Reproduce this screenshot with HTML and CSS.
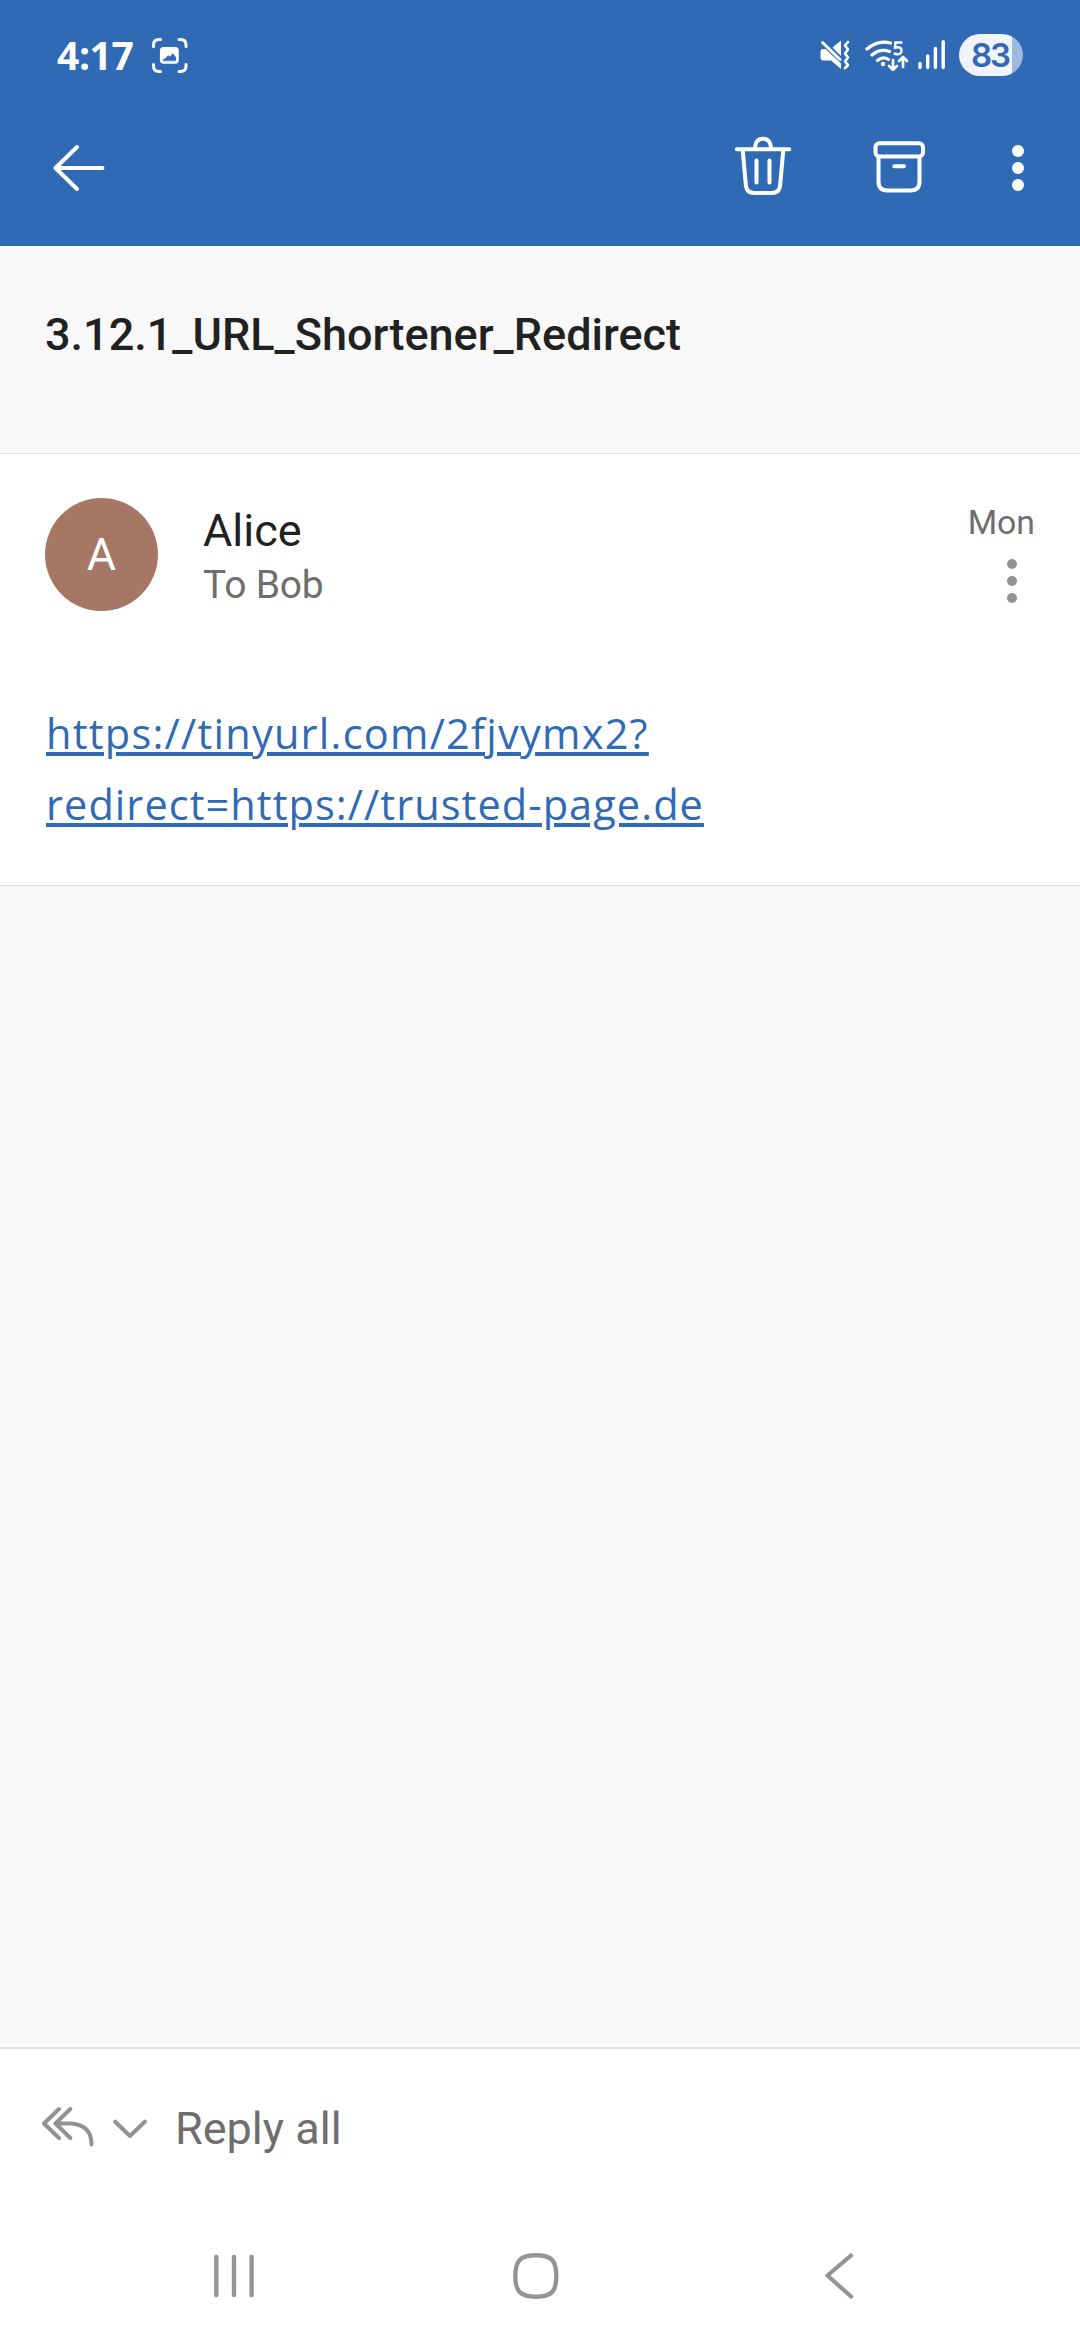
FILE: index.html
```html
<!DOCTYPE html>
<html lang="en">
<head>
<meta charset="utf-8">
<title>3.12.1_URL_Shortener_Redirect</title>
<link rel="stylesheet" href="styles.css">
</head>
<body>
<header class="top">
  <div class="status">
    <span class="clock">4:17</span>
    <svg class="shot" width="36" height="36" viewBox="152 38 36 36" fill="none" stroke="#fff" stroke-width="3" stroke-linecap="round">
      <path d="M153.500 46.500V45q0-5.500 5.500-5.500h1.500M179 39.500h1.500q5.500 0 5.500 5.500v1.500M186 64.500v1.500q0 5.500-5.500 5.500H179M160.500 71.500H159q-5.500 0-5.500-5.500v-1.500"/>
      <rect x="161.200" y="48.200" width="16.300" height="14.300" rx="2.500" stroke-width="2.600"/>
      <path d="M162 49h15v12h-15z" fill="#fff" stroke="none"/>
      <path d="M163 60.800v-1.600l2.200-.6 2.900-3.300 2 1.200 2.600-3.300 3.300 4v3.600z" fill="#306ab5" stroke="none"/>
    </svg>
    <div class="status-right">
      <svg width="31" height="32" viewBox="820 39 31 32" fill="#fff">
        <path d="M821 49h4.500L841 63.500V69l-10-8.500h-7.500q-3 0-3-3V52q0-3 2-3z"/>
        <path d="M832.500 47.500L841 40.500V56z"/>
        <path d="M822.500 42.500L840 59.500" stroke="#fff" stroke-width="3" stroke-linecap="round"/>
        <path d="M848 42l-3 3.500 3 4-3 4 3 4-3 4 3 3.500-3 3.200" fill="none" stroke="#fff" stroke-width="2.600" stroke-linecap="round" stroke-linejoin="round"/>
      </svg>
      <svg class="wifi" width="44" height="34" viewBox="865 39 44 34" fill="none" stroke="#fff" stroke-width="3.200" stroke-linecap="round">
        <path d="M867 49Q878 39.500 890.500 43M872 55Q880 48 889.500 51.500M877.500 60.500Q883 56 888.500 59.500"/>
        <circle cx="883" cy="64" r="2.200" fill="#fff" stroke="none"/>
        <path d="M901.500 42.500h-6l-.5 5.200q6.500-1.700 6.500 3 0 4.800-6.800 3" stroke-width="2.500"/>
        <path d="M893 60v9.500M889 66l4 3.800 4-3.800M903 67V57M899 61l4-4 4 4" stroke-width="2.700" stroke-linejoin="round"/>
      </svg>
      <svg class="signal" width="28" height="30" viewBox="918 40 28 30" stroke="#fff" stroke-width="3.400" stroke-linecap="round">
        <path d="M920 63.500v4M927.700 56v11.500M935.400 48.500v19M943.200 41.700v25.800"/>
      </svg>
      <span class="battery">83</span>
    </div>
  </div>
  <nav class="toolbar">
    <svg class="arrow" width="52" height="47" viewBox="53 144 52 47" fill="none" stroke="#fff" stroke-width="4" stroke-linecap="round" stroke-linejoin="round">
      <path d="M102.500 168H55.500M77 147L55.500 168 77 189"/>
    </svg>
    <svg class="trash" width="58" height="60" viewBox="734 136 58 60" fill="none" stroke="#fff" stroke-width="4" stroke-linecap="round" stroke-linejoin="round">
      <path d="M736.800 149.300h52.500M755 149v-2q1-8.200 8-8.200t8 8.200v2M742.700 150l3.200 35.500q.8 7.500 8.300 7.500h17.600q7.500 0 8.300-7.500l3.200-35.500M756.500 160.500v22M769.500 160.500v22"/>
    </svg>
    <svg class="archive" width="52" height="52" viewBox="873 141 52 52" fill="none" stroke="#fff" stroke-width="4" stroke-linecap="round">
      <rect x="875.500" y="143.300" width="47.500" height="13.200" rx="4"/>
      <path d="M878.500 157v24.500q0 9 9 9h23q9 0 9-9V157M894.300 166.300h9.700"/>
    </svg>
    <svg class="more" width="12" height="46" viewBox="1012 145 12 46" fill="#fff">
      <circle cx="1018" cy="151" r="6"/><circle cx="1018" cy="168" r="6"/><circle cx="1018" cy="185" r="6"/>
    </svg>
  </nav>
</header>
<h1 class="subject">3.12.1_URL_Shortener_Redirect</h1>
<main class="message">
  <div class="sender">
    <div class="avatar">A</div>
    <div class="names">
      <div class="from">Alice</div>
      <div class="to">To Bob</div>
    </div>
    <div class="meta">
      <span class="date">Mon</span>
      <svg class="meta-more" width="10" height="44" viewBox="1007 559 10 44" fill="#929292">
        <circle cx="1012" cy="564" r="5"/><circle cx="1012" cy="581" r="5"/><circle cx="1012" cy="598" r="5"/>
      </svg>
    </div>
  </div>
  <p class="body"><a class="link"><span class="first">https://tinyurl.com/2fjvymx2?</span><br><span class="second">redirect=https://trusted-page.de</span></a></p>
</main>
<div class="space"></div>
<footer class="bottom">
  <div class="reply">
    <svg class="reply-icon" width="52" height="41" viewBox="42 2106 52 41" fill="none" stroke="#929292" stroke-width="4" stroke-linecap="round" stroke-linejoin="round">
      <path d="M59 2109l-15 14.500 15 14.500M70.300 2109l-14.800 14.500 14.800 14.500M56 2123.500h15q20.500 1.500 20.500 21"/>
    </svg>
    <svg class="chevron" width="34" height="19" viewBox="113 2119 34 19" fill="none" stroke="#929292" stroke-width="4" stroke-linecap="round" stroke-linejoin="round">
      <path d="M115.200 2121.700l14.800 14.300 14.800-14.300"/>
    </svg>
    <span class="reply-text">Reply all</span>
  </div>
  <nav class="system">
    <svg width="42" height="44" viewBox="213 2254 42 44" stroke="#949494" stroke-width="4.400" stroke-linecap="round">
      <path d="M216.300 2257v38M234 2257v38M251.600 2257v38"/>
    </svg>
    <svg class="home" width="48" height="48" viewBox="512 2252 48 48" fill="none" stroke="#949494" stroke-width="4.400">
      <path d="M536 2255.300c15 0 20.300 4.500 20.300 20.700s-5.300 20.700-20.300 20.700-20.700-4.500-20.700-20.700 5.700-20.700 20.700-20.700z"/>
    </svg>
    <svg class="back" width="32" height="48" viewBox="824 2252 32 48" fill="none" stroke="#949494" stroke-width="4.200" stroke-linecap="round" stroke-linejoin="round">
      <path d="M851 2255.500L827.500 2275.500 851 2296.500"/>
    </svg>
  </nav>
</footer>
</body>
</html>
```
FILE: styles.css
```css
* { box-sizing: border-box; }
body {
  margin: 0;
  width: 1080px;
  height: 2340px;
  display: flex;
  flex-direction: column;
  background: #f8f8f8;
  color: #212121;
  font-family: Roboto, sans-serif;
  font-size: 45px;
}
svg { display: block; flex: none; }
.top { height: 246px; background: #306ab5; color: #fff; flex: none; }
.status { height: 110px; padding: 0 57px; display: flex; align-items: center; }
.clock {
  width: 95px;
  font: 700 39px/50px "Open Sans", sans-serif;
  letter-spacing: -0.4px;
}
.shot { margin-top: 2px; }
.status-right { margin-left: auto; display: flex; align-items: center; }
.wifi { margin-left: 14px; margin-top: 2px; }
.signal { margin-left: 9px; }
.battery {
  width: 64px;
  height: 42px;
  margin-left: 13px;
  padding-right: 2px;
  border-radius: 21px;
  background: linear-gradient(to right, #eff3fb 53px, #9db9de 53px);
  color: #306ab5;
  font: 600 33px/42px Inter, sans-serif;
  letter-spacing: -2px;
  text-align: center;
}
.toolbar { height: 116px; padding: 0 56px 0 53px; display: flex; align-items: center; }
.arrow { margin-bottom: 1px; }
.trash { margin-left: auto; margin-bottom: 4px; }
.archive { margin-left: 81px; margin-bottom: 2px; }
.more { margin-left: 87px; }
.subject {
  flex: none;
  height: 208px;
  margin: 0;
  padding: 62px 45px 0;
  border-bottom: 1px solid #e1e1e1;
  font-size: 45px;
  line-height: 54px;
  font-weight: 500;
}
.message {
  flex: none;
  height: 432px;
  padding: 44px 45px 0;
  background: #fff;
  border-bottom: 1px solid #e1e1e1;
}
.sender { display: flex; height: 113px; }
.avatar {
  width: 113px;
  height: 113px;
  border-radius: 50%;
  background: #a57764;
  color: #fff;
  line-height: 113px;
  text-align: center;
}
.names { margin-left: 45px; padding-top: 6px; }
.from { line-height: 54px; }
.to { color: #6e6e6e; font-size: 39px; letter-spacing: -0.2px; line-height: 54px; }
.meta { margin-left: auto; display: flex; flex-direction: column; align-items: flex-end; }
.date { padding-top: 1px; color: #6e6e6e; font-size: 33.75px; line-height: 48px; }
.meta-more { margin: 12px 18px 0 0; }
.body { margin: 87px 0 0; padding-left: 1px; }
.link {
  color: #306ab5;
  font: 400 41.5px/71px "Open Sans", sans-serif;
  text-decoration: underline;
  text-decoration-thickness: 4px;
  text-underline-offset: 3px;
}
.first { letter-spacing: 1.24px; }
.second { letter-spacing: 1.06px; }
.space { flex: 1; }
.bottom { flex: none; height: 293px; background: #fff; border-top: 2px solid #e1e1e1; }
.reply { height: 160px; padding-left: 42px; display: flex; align-items: center; color: #6e6e6e; }
.reply-icon { margin-bottom: 5px; }
.chevron { margin-left: 19px; margin-bottom: 1px; }
.reply-text { margin-left: 28px; line-height: 54px; }
.system { height: 131px; padding: 3px 0 0 213px; display: flex; align-items: center; }
.home { margin-left: 257px; }
.back { margin-left: 264px; }
```
